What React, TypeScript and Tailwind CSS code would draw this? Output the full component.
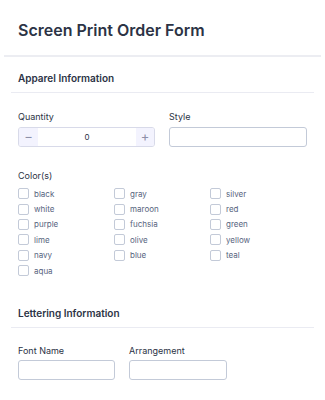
import React from 'react';

const colors = [
    'black', 'gray', 'silver',
    'white', 'maroon', 'red',
    'purple', 'fuchsia', 'green',
    'lime', 'olive', 'yellow',
    'navy', 'blue', 'teal',
    'aqua',
];

function Checkbox({ label }: { label: string }) {
    return (
        <label className="flex h-[15.4px] items-center gap-[5px]">
            <span className="h-[11px] w-[11px] rounded-[2px] border border-[#c3cad8] bg-white" />
            <span className="text-[8px] text-[#57647e]">{label}</span>
        </label>
    );
}

function SectionTitle({ children }: { children: string }) {
    return (
        <div className="mx-[11px] border-b border-[#eaebf2] px-[7px] pb-[6px]">
            <h3 className="text-[10px] font-semibold text-[#2c3345]">{children}</h3>
        </div>
    );
}

export default function App() {
    return (
        <div className="h-[400px] w-[325px] overflow-hidden bg-white font-['Inter',sans-serif] text-[#2c3345]">
            <div className="mx-[4px] border-b-2 border-[#ecedf2] px-[14px] pb-[13px] pt-[18px]">
                <h1 className="text-[16px] font-semibold leading-[24px]">Screen Print Order Form</h1>
            </div>

            <div className="pt-[14px]">
                <SectionTitle>Apparel Information</SectionTitle>
            </div>

            <div className="mt-[18px] flex gap-[14px] px-[18px]">
                <div className="w-[137px]">
                    <div className="mb-[4px] text-[9px] leading-[12px]">Quantity</div>
                    <div className="flex h-[20px] overflow-hidden rounded-[3px] border border-[#d8dae9]">
                        <div className="flex w-[19px] items-center justify-center bg-[#f3f3fe] text-[13px] text-[#8d8fa8]">−</div>
                        <div className="flex flex-1 items-center justify-center text-[8px] text-[#2c3345]">0</div>
                        <div className="flex w-[18px] items-center justify-center bg-[#f3f3fe] text-[13px] text-[#8d8fa8]">+</div>
                    </div>
                </div>
                <div className="w-[138px]">
                    <div className="mb-[4px] text-[9px] leading-[12px]">Style</div>
                    <div className="h-[20px] rounded-[3px] border border-[#c3cad8]" />
                </div>
            </div>

            <div className="mt-[23px] px-[18px]">
                <div className="mb-[4px] text-[9px] leading-[12px]">Color(s)</div>
                <div className="grid grid-cols-[96px_96px_96px]">
                    {colors.map((c) => (
                        <Checkbox key={c} label={c} />
                    ))}
                </div>
            </div>

            <div className="mt-[28px]">
                <SectionTitle>Lettering Information</SectionTitle>
            </div>

            <div className="mt-[17px] flex gap-[14px] px-[18px]">
                <div className="w-[97px]">
                    <div className="mb-[3px] text-[9px] leading-[12px]">Font Name</div>
                    <div className="h-[20px] rounded-[3px] border border-[#c3cad8]" />
                </div>
                <div className="w-[98px]">
                    <div className="mb-[3px] text-[9px] leading-[12px]">Arrangement</div>
                    <div className="h-[20px] rounded-[3px] border border-[#c3cad8]" />
                </div>
            </div>
        </div>
    );
}
